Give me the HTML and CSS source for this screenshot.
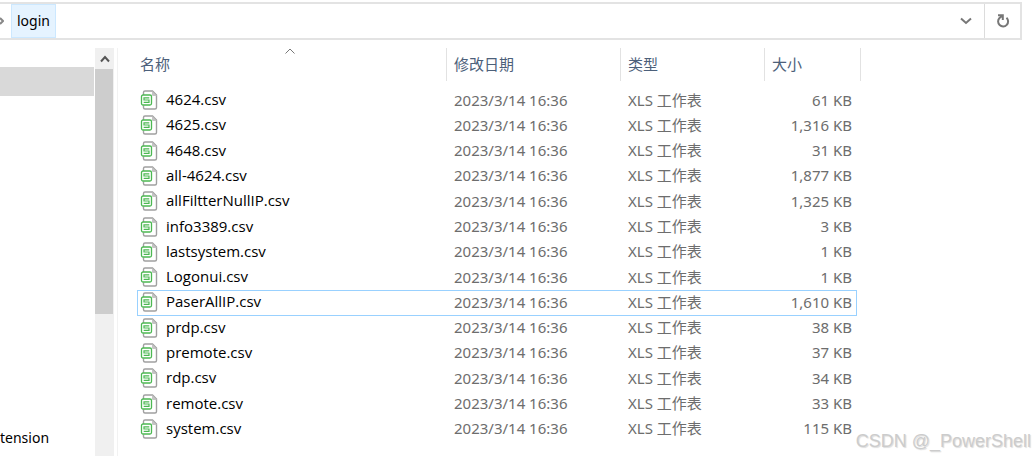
FILE: index.html
```
<!DOCTYPE html>
<html lang="zh-CN">
<head>
  <meta charset="UTF-8">
  <meta name="viewport" content="width=device-width, initial-scale=1.0">
  <title>login</title>
  <link rel="stylesheet" href="styles.css">
</head>
<body>
  <svg class="sprite" aria-hidden="true">
    <symbol id="csv" viewBox="0 0 18 20">
      <path d="M3.500 5V2.500a1.500 1.500 0 0 1 1.500-1.500H12.500L16.500 5v12.500a1.500 1.500 0 0 1-1.500 1.500H5a1.500 1.500 0 0 1-1.500-1.500V15.500" fill="#fff" stroke="#a0a0a0" stroke-width="1.400"/>
      <path d="M12 1l5 5h-4a1 1 0 0 1-1-1z" fill="#c4c4c4"/>
      <rect x="1.500" y="5" width="10" height="10" rx="1.500" fill="#fff" stroke="#4cb852" stroke-width="1.300"/>
      <path d="M9.300 7.800H4V10h5v2.300H3.700" fill="none" stroke="#4cb852" stroke-width="1.200"/>
    </symbol>
  </svg>

  <div class="address-bar">
    <svg class="crumb-arrow" viewBox="0 0 4 8"><path d="M0 1l3 3-3 3" /></svg>
    <button class="crumb">login</button>
    <button class="address-drop" aria-label="历史记录">
      <svg width="12" height="8" viewBox="0 0 12 8"><path d="M1 1.500l5 4.500 5-4.500"/></svg>
    </button>
    <button class="refresh" aria-label="刷新">
      <svg width="14" height="14" viewBox="0 0 14 14"><path d="M10.500 3.800A5 5 0 1 1 3.500 4L6 2M2 1.200h4.800V6"/></svg>
    </button>
  </div>

  <div class="explorer">
    <nav class="sidebar">
      <div class="tree">
        <div class="tree-selected"></div>
        <div class="tree-item">tension</div>
      </div>
      <div class="scrollbar">
        <button class="scroll-up" aria-label="向上滚动">
          <svg width="10" height="8" viewBox="0 0 10 8"><path d="M1 6.500l4-4.500 4 4.500"/></svg>
        </button>
        <div class="scroll-thumb"></div>
      </div>
    </nav>

    <main class="files">
      <table class="file-table">
        <colgroup>
          <col class="col-name">
          <col class="col-date">
          <col class="col-type">
          <col class="col-size">
        </colgroup>
        <thead>
          <tr>
            <th>
              <svg class="sort-arrow" width="12" height="6" viewBox="0 0 12 6"><path d="M1.500 5.500L6 1l4.500 4.500"/></svg>
              <button>名称</button>
            </th>
            <th><button>修改日期</button></th>
            <th><button>类型</button></th>
            <th><button>大小</button></th>
          </tr>
        </thead>
        <tbody>
          <tr><td><svg class="icon"><use href="#csv"/></svg>4624.csv</td><td>2023/3/14 16:36</td><td>XLS 工作表</td><td>61 KB</td></tr>
          <tr><td><svg class="icon"><use href="#csv"/></svg>4625.csv</td><td>2023/3/14 16:36</td><td>XLS 工作表</td><td>1,316 KB</td></tr>
          <tr><td><svg class="icon"><use href="#csv"/></svg>4648.csv</td><td>2023/3/14 16:36</td><td>XLS 工作表</td><td>31 KB</td></tr>
          <tr><td><svg class="icon"><use href="#csv"/></svg>all-4624.csv</td><td>2023/3/14 16:36</td><td>XLS 工作表</td><td>1,877 KB</td></tr>
          <tr><td><svg class="icon"><use href="#csv"/></svg>allFiltterNullIP.csv</td><td>2023/3/14 16:36</td><td>XLS 工作表</td><td>1,325 KB</td></tr>
          <tr><td><svg class="icon"><use href="#csv"/></svg>info3389.csv</td><td>2023/3/14 16:36</td><td>XLS 工作表</td><td>3 KB</td></tr>
          <tr><td><svg class="icon"><use href="#csv"/></svg>lastsystem.csv</td><td>2023/3/14 16:36</td><td>XLS 工作表</td><td>1 KB</td></tr>
          <tr><td><svg class="icon"><use href="#csv"/></svg>Logonui.csv</td><td>2023/3/14 16:36</td><td>XLS 工作表</td><td>1 KB</td></tr>
          <tr class="focused"><td><svg class="icon"><use href="#csv"/></svg>PaserAllIP.csv</td><td>2023/3/14 16:36</td><td>XLS 工作表</td><td>1,610 KB</td></tr>
          <tr><td><svg class="icon"><use href="#csv"/></svg>prdp.csv</td><td>2023/3/14 16:36</td><td>XLS 工作表</td><td>38 KB</td></tr>
          <tr><td><svg class="icon"><use href="#csv"/></svg>premote.csv</td><td>2023/3/14 16:36</td><td>XLS 工作表</td><td>37 KB</td></tr>
          <tr><td><svg class="icon"><use href="#csv"/></svg>rdp.csv</td><td>2023/3/14 16:36</td><td>XLS 工作表</td><td>34 KB</td></tr>
          <tr><td><svg class="icon"><use href="#csv"/></svg>remote.csv</td><td>2023/3/14 16:36</td><td>XLS 工作表</td><td>33 KB</td></tr>
          <tr><td><svg class="icon"><use href="#csv"/></svg>system.csv</td><td>2023/3/14 16:36</td><td>XLS 工作表</td><td>115 KB</td></tr>
        </tbody>
      </table>
    </main>
  </div>

  <div class="watermark">CSDN @_PowerShell</div>
</body>
</html>
```
FILE: styles.css
```
* {
  box-sizing: border-box;
}
body {
  margin: 0;
  padding: 2px 0 3px;
  min-height: 100vh;
  display: flex;
  flex-direction: column;
  background: #fff;
  color: #000;
  font-family: "Noto Sans", "Noto Sans CJK SC", sans-serif;
  font-size: 14px;
  line-height: 20px;
}
button {
  margin: 0;
  padding: 0;
  border: none;
  background: none;
  color: inherit;
  font: inherit;
  cursor: pointer;
}
svg {
  fill: none;
  stroke-width: 2;
}
.sprite {
  position: absolute;
  width: 0;
  height: 0;
}

/* address bar */
.address-bar {
  display: flex;
  align-items: stretch;
  height: 38px;
  margin-right: 12px;
  border: 2px solid #e3e3e3;
  border-left: none;
}
.crumb-arrow {
  width: 4px;
  height: 8px;
  margin-right: 7px;
  align-self: center;
  stroke: #888;
}
.crumb {
  padding: 0 5px;
  margin-right: auto;
  background: #e5f3ff;
  border: 1px solid #cce8ff;
}
.address-drop,
.refresh {
  width: 36px;
  display: flex;
  align-items: center;
  justify-content: center;
  stroke: #777;
}
.refresh {
  border-left: 1px solid #dcdcdc;
}

/* main area */
.explorer {
  display: flex;
  flex: 1;
  margin-top: 8px;
}
.sidebar {
  display: flex;
  width: 118px;
  border-right: 1px solid #f2f2f2;
}
.tree {
  display: flex;
  flex-direction: column;
  flex: 1;
  padding: 19px 1px 8px 0;
}
.tree-selected {
  height: 29px;
  background: #d9d9d9;
}
.tree-item {
  margin-top: auto;
}
.scrollbar {
  width: 19px;
  margin-right: 3px;
  background: #f0f0f0;
}
.scroll-up {
  display: flex;
  align-items: center;
  justify-content: center;
  width: 100%;
  height: 21px;
  stroke: #555;
}
.scroll-thumb {
  height: 245px;
  margin-right: 1px;
  background: #cdcdcd;
}

/* file list */
.files {
  flex: 1;
  padding-left: 19px;
}
.file-table {
  width: 724px;
  height: 394px;
  table-layout: fixed;
  border-collapse: separate;
  border-spacing: 0;
  font-size: 15px;
}
.col-name {
  width: 310px;
}
.col-date {
  width: 174px;
}
.col-type {
  width: 144px;
}
.col-size {
  width: 96px;
}
th {
  position: relative;
  height: 40px;
  padding: 0 0 9px 7px;
  text-align: left;
  font-weight: normal;
  color: #4c607a;
}
th:first-child {
  padding-left: 3px;
}
th::after {
  content: "";
  position: absolute;
  top: 0;
  right: 0;
  bottom: 7px;
  width: 1px;
  background: #e2e2e2;
}
.sort-arrow {
  position: absolute;
  top: 0;
  left: 50%;
  margin-left: -8px;
  stroke: #777;
  stroke-width: 1;
}
td {
  padding: 0 0 2px 7px;
  color: #6d6d6d;
  white-space: nowrap;
}
td:first-child {
  padding-left: 3px;
  font-family: "Open Sans", sans-serif;
  color: #000;
}
td:last-child {
  padding-right: 9px;
  text-align: right;
}
.icon {
  width: 18px;
  height: 20px;
  margin-right: 8px;
  vertical-align: -5px;
  stroke-width: 1;
}
.focused {
  position: relative;
}
.focused::after {
  content: "";
  position: absolute;
  top: 0;
  left: 0;
  right: 4px;
  bottom: 0;
  border: 1px solid #99d1ff;
}

.watermark {
  position: absolute;
  right: 3px;
  bottom: 8px;
  font-family: "Liberation Sans", sans-serif;
  font-size: 18px;
  color: #ccc;
  text-shadow: 1px 1px 1px #ddd;
}
```
